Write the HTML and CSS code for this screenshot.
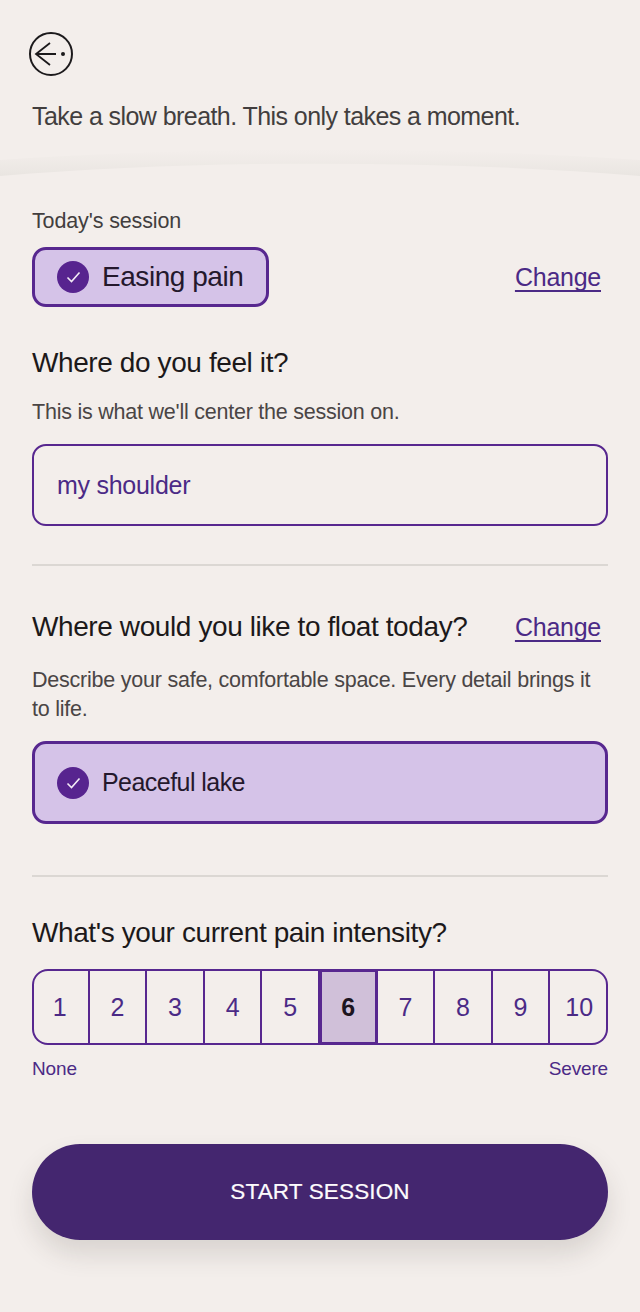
FILE: index.html
```html
<!DOCTYPE html>
<html lang="en">
<head>
<meta charset="utf-8">
<title>Session</title>
<link rel="stylesheet" href="styles.css">
</head>
<body>
<div class="page">
  <header class="top">
    <button class="back" aria-label="Back">
      <svg width="46" height="46" viewBox="0 0 46 46" fill="none" stroke="#1c1a1c" stroke-width="2">
        <circle cx="23" cy="23" r="21"/>
        <path d="M28 23H8M22 12L8 23L22 34" stroke-width="1.800"/>
        <circle cx="35" cy="23" r="2" fill="#1c1a1c" stroke="none"/>
      </svg>
    </button>
    <p class="intro">Take a slow breath. This only takes a moment.</p>
  </header>
  <svg class="curve" viewBox="0 0 640 40" preserveAspectRatio="none" aria-hidden="true">
    <defs>
      <linearGradient id="sh" x1="0" y1="0" x2="0" y2="1">
        <stop offset="0" stop-color="#ebe7e3" stop-opacity="0"/>
        <stop offset="1" stop-color="#e9e5e1"/>
      </linearGradient>
    </defs>
    <path d="M0 26C200 9.500 440 9.500 640 26V10C440 -4 200 -4 0 10Z" fill="url(#sh)"/>
  </svg>
  <main class="content">
    <div class="label">Today's session</div>
    <div class="session-row">
      <div class="chip">
        <span class="check"><svg width="15" height="12" viewBox="0 0 15 12" fill="none" stroke="#f3ecf6" stroke-width="1.600"><path d="M1.500 6.500L5.500 10.500L13.500 1.500"/></svg></span>
        <span class="chip-text">Easing pain</span>
      </div>
      <a class="change" href="#">Change</a>
    </div>

    <h2 class="title where">Where do you feel it?</h2>
    <p class="help first">This is what we'll center the session on.</p>
    <div class="input">my shoulder</div>
    <hr class="rule rule-a">

    <div class="title-row">
      <h2 class="title">Where would you like to float today?</h2>
      <a class="change" href="#">Change</a>
    </div>
    <p class="help second">Describe your safe, comfortable space. Every detail brings it to life.</p>
    <div class="place">
      <span class="check"><svg width="15" height="12" viewBox="0 0 15 12" fill="none" stroke="#f3ecf6" stroke-width="1.600"><path d="M1.500 6.500L5.500 10.500L13.500 1.500"/></svg></span>
      <span class="place-text">Peaceful lake</span>
    </div>
    <hr class="rule rule-b">

    <h2 class="title">What's your current pain intensity?</h2>
    <div class="scale">
      <div class="cell">1</div>
      <div class="cell">2</div>
      <div class="cell">3</div>
      <div class="cell">4</div>
      <div class="cell">5</div>
      <div class="cell active">6</div>
      <div class="cell">7</div>
      <div class="cell">8</div>
      <div class="cell">9</div>
      <div class="cell">10</div>
    </div>
    <div class="scale-labels"><span>None</span><span>Severe</span></div>
    <button class="start">START SESSION</button>
  </main>
</div>
</body>
</html>
```
FILE: styles.css
```css
* { box-sizing: border-box; }
html, body { margin: 0; padding: 0; }
body {
  background: #f3eeeb;
  font-family: "Liberation Sans", Arial, sans-serif;
  color: #1f1a1f;
}
.page { width: 640px; height: 1312px; overflow: hidden; }
.top { padding: 31px 32px 0; height: 150px; }
.back {
  display: block; width: 46px; height: 46px; padding: 0; margin-left: -4px;
  background: none; border: 0;
}
.back svg { display: block; }
.intro {
  margin: 22px 0 0; font-size: 25px; line-height: 34px;
  color: #423e3e; letter-spacing: -.57px;
}
.curve { display: block; width: 640px; height: 40px; }
.content { padding: 20px 32px 0; margin-top: -10px; }
.label { font-size: 21.500px; line-height: 26px; color: #423e3e; margin-top: 8px; letter-spacing: -.13px; }
.session-row { display: flex; align-items: center; justify-content: space-between; margin-top: 13px; padding-right: 7px; }
.chip {
  width: 237px; height: 60px; display: flex; align-items: center; gap: 13px;
  padding-left: 22px; background: #d5c3e8; border: 3px solid #57278f; border-radius: 14px;
}
.check {
  width: 32px; height: 32px; border-radius: 50%; background: #57248f;
  display: flex; align-items: center; justify-content: center; flex: none;
}
.check svg { display: block; }
.chip-text { font-size: 28px; color: #24182c; letter-spacing: -.45px; }
.change {
  font-size: 25px; color: #4b2a86; letter-spacing: -.25px;
  text-decoration: underline; text-decoration-thickness: 2px;
  text-underline-offset: 4px; text-decoration-skip-ink: none;
}
.title { margin: 0; font-weight: 400; font-size: 28px; line-height: 36px; color: #1c191a; letter-spacing: -.4px; }
.where { margin-top: 38px; }
.help { margin: 0; font-size: 21.500px; line-height: 29px; color: #4a4545; letter-spacing: -.23px; }
.help.first { margin-top: 17px; }
.input {
  height: 82px; margin-top: 17px; padding-left: 23px; display: flex; align-items: center;
  border: 2px solid #57278f; border-radius: 14px; font-size: 25px; color: #4b2a86; letter-spacing: -.27px;
}
.rule { border: 0; height: 2px; background: #dbd7d3; margin: 0; }
.rule-a { margin-top: 38px; }
.title-row { display: flex; align-items: center; justify-content: space-between; margin-top: 43px; padding-right: 7px; }
.help.second { margin-top: 21px; }
.place {
  height: 83px; margin-top: 17px; display: flex; align-items: center; gap: 13px; padding-left: 22px;
  background: #d5c3e8; border: 3px solid #57278f; border-radius: 14px;
}
.place-text { font-size: 25px; color: #24182c; letter-spacing: -.55px; }
.rule-b { margin-top: 51px; margin-bottom: 38px; }
.scale {
  display: flex; height: 76px; margin-top: 18px;
  box-shadow: inset 0 0 0 2px #57278f; border-radius: 16px; overflow: hidden;
}
.cell {
  flex: 0 0 57.600px; display: flex; align-items: center; justify-content: center;
  font-size: 25px; color: #4b2a86; border-right: 2px solid #57278f;
}
.cell:last-child { border-right: 0; }
.cell.active {
  flex-basis: 58.600px; margin-left: -1px;
  background: #d0c0d9; color: #1c1420; font-weight: 700;
  border: 3px solid #57278f;
}
.scale-labels { display: flex; justify-content: space-between; margin-top: 12px; font-size: 19px; line-height: 24px; color: #4b2a86; letter-spacing: -.15px; }
.start {
  display: block; width: 100%; height: 96px; margin-top: 63px;
  border: 0; border-radius: 48px; background: #44266f; color: #fdfbfd;
  font: 400 22.500px "Liberation Sans", Arial, sans-serif; letter-spacing: .15px;
  -webkit-text-stroke: .2px #fdfbfd;
  box-shadow: 0 14px 26px rgba(60, 50, 40, .14);
}
```
